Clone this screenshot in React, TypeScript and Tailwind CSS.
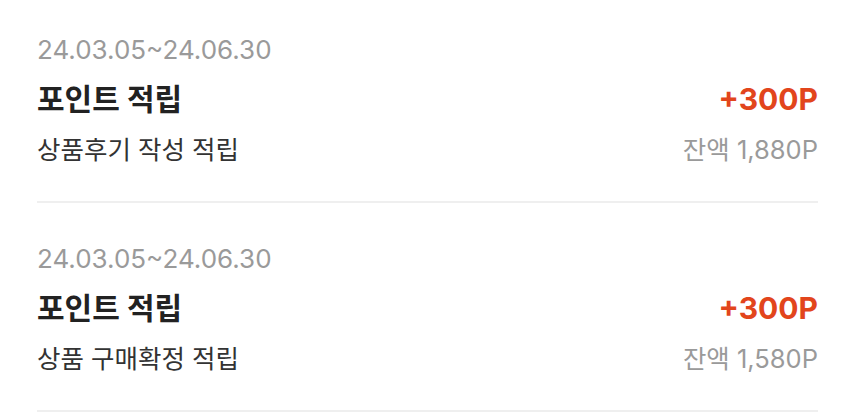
const items = [
  {
    period: "24.03.05~24.06.30",
    title: "포인트 적립",
    desc: "상품후기 작성 적립",
    amount: "+300P",
    balance: "1,880P",
  },
  {
    period: "24.03.05~24.06.30",
    title: "포인트 적립",
    desc: "상품 구매확정 적립",
    amount: "+300P",
    balance: "1,580P",
  },
];

export default function App() {
  return (
    <div className="w-[856px] h-[415px] overflow-hidden bg-white">
      <div
        className="pl-[37px] pr-[38px] -mt-[6px]"
        style={{ fontFamily: '"Inter", "Noto Sans CJK KR", sans-serif' }}
      >
        {items.map((item, i) => (
          <div key={i} className="pt-[32px] pb-[25px] border-b-2 border-[#efefef]">
            <p className="text-[26px] leading-[48px] text-[#9a9a9a]">{item.period}</p>
            <div className="flex items-center justify-between h-[50px]">
              <span className="text-[30px] font-bold text-[#222]">{item.title}</span>
              <span className="text-[30px] font-bold text-[#e2451c]">{item.amount}</span>
            </div>
            <div className="flex items-center justify-between h-[52px]">
              <span className="text-[25.5px] text-[#333]">{item.desc}</span>
              <span className="text-[25.5px] text-[#9a9a9a]">잔액 {item.balance}</span>
            </div>
          </div>
        ))}
      </div>
    </div>
  );
}
